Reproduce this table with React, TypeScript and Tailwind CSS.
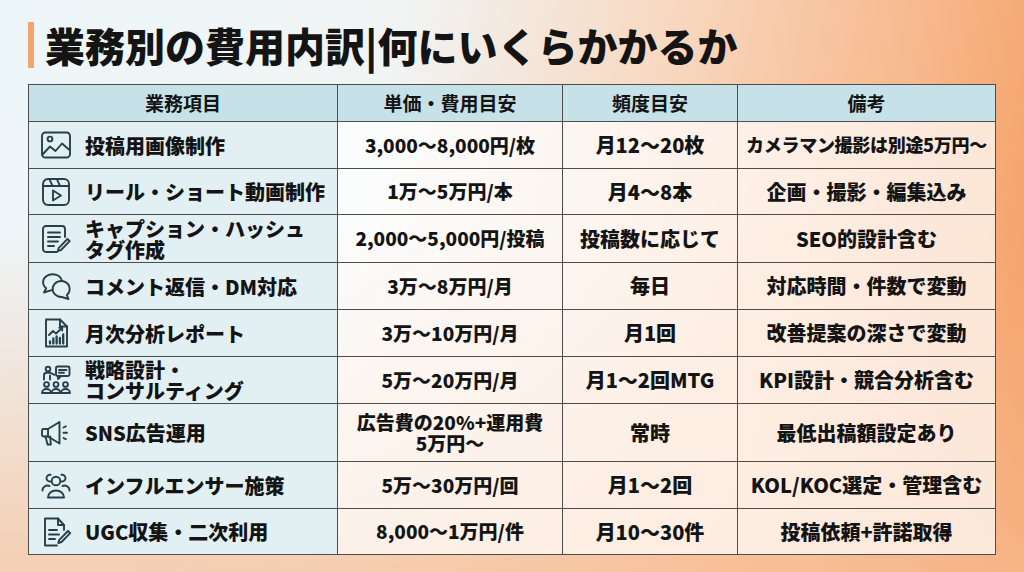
import type { ReactNode } from "react";

const stroke = "#263f4a";

function Icon({ children }: { children: ReactNode }) {
  return (
    <svg
      className="w-[32px] h-[32px] shrink-0"
      viewBox="0 0 32 32"
      fill="none"
      stroke={stroke}
      strokeWidth={1.9}
      strokeLinecap="round"
      strokeLinejoin="round"
    >
      {children}
    </svg>
  );
}

const ImageIcon = () => (
  <Icon>
    <rect x="2" y="3.5" width="28" height="25" rx="3.5" />
    <circle cx="10" cy="10" r="2.4" />
    <path d="M2.5 25.5 L10 17.5 L15.5 22 L22 14.5 L29.5 21" />
  </Icon>
);

const ReelIcon = () => (
  <Icon>
    <rect x="3" y="3" width="26" height="26" rx="5" />
    <path d="M3 10 H29" />
    <path d="M9.5 3.3 L12.5 9.8 M17 3.3 L20 9.8" />
    <path d="M13 14.5 L21 19.5 L13 24.5 Z" />
  </Icon>
);

const CaptionIcon = () => (
  <Icon>
    <path d="M17 29 H6 a3 3 0 0 1 -3 -3 V6 a3 3 0 0 1 3 -3 H22 a3 3 0 0 1 3 3 V14" />
    <path d="M8 9.5 H20 M8 14 H20 M8 18.5 H18 M8 23 H14" />
    <path d="M27.5 16 L29.7 18.2 L21 27 L17.8 28 L18.8 24.8 Z" />
  </Icon>
);

const ChatIcon = () => (
  <Icon>
    <path d="M4 22.5 L6.2 18.2 A9.5 8 0 1 1 11.5 20.2 Z" />
    <path d="M28.5 29 L26.8 25 A8.5 8 0 1 0 21.8 27 Z" fill="#e3f0f3" />
  </Icon>
);

const ReportIcon = () => (
  <Icon>
    <path d="M20 2.5 H6 V29.5 H27 V9.5 Z" />
    <path d="M20 2.5 V9.5 H27" />
    <path d="M9 18 L13 14 L16 16.5 L22 11" />
    <path d="M19.3 10.8 H22.2 V13.6" />
    <path d="M10 26.5 V24.5 M13.3 26.5 V21.5 M16.6 26.5 V19.5 M19.9 26.5 V21 M23.2 26.5 V17.5" strokeWidth={2.3} />
  </Icon>
);

const StrategyIcon = () => (
  <Icon>
    <circle cx="8" cy="5" r="2.3" />
    <path d="M4 15.5 V11.2 a2.5 2.5 0 0 1 2.5 -2.5 H10 L14.5 10.8" />
    <path d="M10 15.5 V11.5" />
    <rect x="16" y="2.5" width="13.5" height="9.5" rx="1.5" />
    <path d="M18 12 V15 L21 12" />
    <path d="M19 6 H26.5 M19 8.8 H24" />
    <circle cx="6.5" cy="20.5" r="2.4" />
    <circle cx="16" cy="20.5" r="2.4" />
    <circle cx="25.5" cy="20.5" r="2.4" />
    <path d="M2 29 a4.5 4 0 0 1 9 0 Z M11.5 29 a4.5 4 0 0 1 9 0 Z M21 29 a4.5 4 0 0 1 9 0 Z" />
  </Icon>
);

const MegaphoneIcon = () => (
  <Icon>
    <path d="M3.5 12 H8 V19.5 H3.5 a1.5 1.5 0 0 1 -1.5 -1.5 V13.5 a1.5 1.5 0 0 1 1.5 -1.5 Z" />
    <path d="M8 12 L19.5 5 V26.5 L8 19.5" />
    <path d="M5.5 19.5 L7.5 27.5 H10.8 L10.2 19.5" />
    <path d="M23.5 10.5 L25.8 9.3 M23.5 15.8 H27 M23.5 21 L25.8 22.2" />
  </Icon>
);

const UsersIcon = () => (
  <Icon>
    <circle cx="16" cy="12" r="4.3" />
    <path d="M8 28.5 a8 7 0 0 1 16 0 Z" />
    <path d="M10.3 12.5 A3.4 3.4 0 1 1 10.6 5.8" />
    <path d="M21.7 12.5 A3.4 3.4 0 1 0 21.4 5.8" />
    <path d="M2.5 21.5 a5 4.5 0 0 1 7 -4.5" />
    <path d="M29.5 21.5 a5 4.5 0 0 0 -7 -4.5" />
  </Icon>
);

const DocIcon = () => (
  <Icon>
    <path d="M24 14 V9 L18 2.5 H5 V29.5 H17" />
    <path d="M18 2.5 V9 H24" />
    <path d="M9 14 H17 M9 18.5 H19 M9 23 H15" />
    <path d="M28 15 L30.2 17.2 L21.5 26 L18.3 27 L19.3 23.8 Z" />
  </Icon>
);

const rows = [
  { icon: <ImageIcon />, name: "投稿用画像制作", price: "3,000〜8,000円/枚", freq: "月12〜20枚", note: "カメラマン撮影は別途5万円〜", h: "h-[47px]" },
  { icon: <ReelIcon />, name: "リール・ショート動画制作", price: "1万〜5万円/本", freq: "月4〜8本", note: "企画・撮影・編集込み", h: "h-[46px]" },
  { icon: <CaptionIcon />, name: "キャプション・ハッシュ\nタグ作成", price: "2,000〜5,000円/投稿", freq: "投稿数に応じて", note: "SEO的設計含む", h: "h-[48px]" },
  { icon: <ChatIcon />, name: "コメント返信・DM対応", price: "3万〜8万円/月", freq: "毎日", note: "対応時間・件数で変動", h: "h-[47px]" },
  { icon: <ReportIcon />, name: "月次分析レポート", price: "3万〜10万円/月", freq: "月1回", note: "改善提案の深さで変動", h: "h-[47px]" },
  { icon: <StrategyIcon />, name: "戦略設計・\nコンサルティング", price: "5万〜20万円/月", freq: "月1〜2回MTG", note: "KPI設計・競合分析含む", h: "h-[47px]" },
  { icon: <MegaphoneIcon />, name: "SNS広告運用", price: "広告費の20%+運用費\n5万円〜", freq: "常時", note: "最低出稿額設定あり", h: "h-[58px]" },
  { icon: <UsersIcon />, name: "インフルエンサー施策", price: "5万〜30万円/回", freq: "月1〜2回", note: "KOL/KOC選定・管理含む", h: "h-[47px]" },
  { icon: <DocIcon />, name: "UGC収集・二次利用", price: "8,000〜1万円/件", freq: "月10〜30件", note: "投稿依頼+許諾取得", h: "h-[46px]" },
];

const cell = "border border-[#4d4d4d] bg-white/70 text-center align-middle px-1 leading-[1.1] whitespace-pre-line";

export default function App() {
  return (
    <div
      className="w-[1024px] h-[572px] overflow-hidden flex flex-col pl-[28px] pt-[22px] text-[#141414] bg-[linear-gradient(to_bottom,rgba(248,200,165,0)_40%,rgba(247,190,150,0.7)_100%),linear-gradient(100deg,#edf6f9_0%,#f1f4f3_36%,#f8d8c0_60%,#f7b98e_82%,#f49c5d_100%)]"
      style={{ fontFamily: '"Noto Sans CJK JP", "Noto Sans", sans-serif' }}
    >
      {/* Title */}
      <div className="flex items-center gap-[11px] h-[46px]">
        <div className="w-[6px] h-[46px] bg-[#f4a56d]" />
        <h1 className="text-[40px] font-black leading-none">
          業務別の費用内訳|何にいくらかかるか
        </h1>
      </div>

      {/* Table */}
      <table className="mt-[16px] w-[967px] table-fixed border-collapse font-black">
        <colgroup>
          <col className="w-[309px]" />
          <col className="w-[225px]" />
          <col className="w-[175px]" />
          <col className="w-[258px]" />
        </colgroup>
        <thead>
          <tr className="h-[37px] bg-[#c6e2e8]">
            {["業務項目", "単価・費用目安", "頻度目安", "備考"].map((t) => (
              <th key={t} className="border border-[#4d4d4d] text-[19px] font-bold text-center align-middle">
                {t}
              </th>
            ))}
          </tr>
        </thead>
        <tbody>
          {rows.map((r, i) => (
            <tr key={r.name} className={r.h}>
              <td className="border border-[#4d4d4d] bg-[#e3f0f3] pl-[11px] pr-1 align-middle">
                <div className="flex items-center gap-[13px]">
                  {r.icon}
                  <span className="text-[20px] leading-[1.05] whitespace-pre-line">{r.name}</span>
                </div>
              </td>
              <td className={`${cell} text-[19px]`}>{r.price}</td>
              <td className={`${cell} text-[20px]`}>{r.freq}</td>
              <td className={`${cell} whitespace-nowrap ${i === 0 ? "text-[18px] tracking-[-0.3px]" : "text-[20px]"}`}>
                {r.note}
              </td>
            </tr>
          ))}
        </tbody>
      </table>
    </div>
  );
}
